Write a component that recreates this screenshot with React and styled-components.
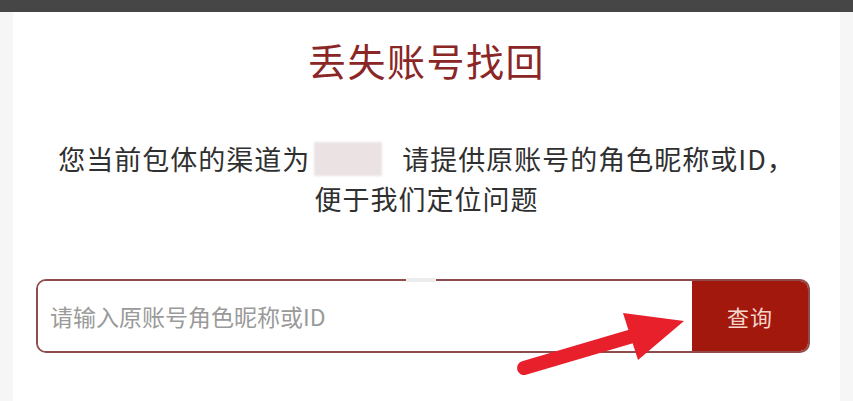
import styled, { createGlobalStyle } from 'styled-components';

const GlobalStyle = createGlobalStyle`
  html, body {
    margin: 0;
    padding: 0;
    height: 100%;
    overflow: hidden;
    background: #f6f6f6;
    font-family: "Noto Sans CJK SC", "Noto Sans", sans-serif;
  }
  #root {
    height: 100%;
  }
`;

const Screen = styled.div`
  display: flex;
  flex-direction: column;
  height: 100%;
`;

const TopBar = styled.div`
  height: 12px;
  background: #464646;
  flex-shrink: 0;
`;

const Page = styled.div`
  flex: 1;
  padding: 0 13px;
  display: flex;
`;

const Card = styled.div`
  flex: 1;
  background: #ffffff;
  padding-top: 25px;
  display: flex;
  flex-direction: column;
  align-items: center;
`;

const Title = styled.h1`
  margin: 0;
  font-size: 38px;
  line-height: 46px;
  font-weight: 400;
  letter-spacing: 1.5px;
  color: #8a2626;
`;

const Notice = styled.p`
  margin: 56px 0 0;
  font-size: 27px;
  line-height: 40px;
  font-weight: 400;
  letter-spacing: 1px;
  color: #303030;
  text-align: center;
`;

const Hidden = styled.span`
  display: inline-block;
  width: 68px;
  height: 34px;
  margin: 0 20px 0 4px;
  vertical-align: -6px;
  background: #ebe3e3;
  filter: blur(1px);
`;

const SearchWrap = styled.div`
  position: relative;
  align-self: stretch;
  margin: 60px 30px 0 23px;
`;

const SearchBox = styled.div`
  display: flex;
  height: 74px;
  border: 2px solid #8f4c4c;
  border-radius: 10px;
  overflow: hidden;
  box-sizing: border-box;
`;

const Input = styled.input`
  flex: 1;
  border: none;
  outline: none;
  padding: 0 0 0 12px;
  font-family: inherit;
  font-size: 23px;
  color: #333;
  background: #fff;

  &::placeholder {
    color: #9a9a9a;
  }
`;

const SearchButton = styled.button`
  width: 116px;
  border: none;
  background: #a3180d;
  color: #f6d6cc;
  font-family: inherit;
  font-size: 22px;
  letter-spacing: 1px;
  cursor: pointer;
`;

const Glare = styled.span`
  position: absolute;
  left: 370px;
  top: -1px;
  width: 30px;
  height: 4px;
  background: #ececec;
`;

const Arrow = styled.svg`
  position: absolute;
  left: 0;
  top: 0;
  overflow: visible;
  pointer-events: none;
`;

const App = () => {
  return (
    <Screen>
      <GlobalStyle />
      <TopBar />
      <Page>
        <Card>
          <Title>丢失账号找回</Title>
          <Notice>
            您当前包体的渠道为<Hidden />请提供原账号的角色昵称或ID，
            <br />
            便于我们定位问题
          </Notice>
          <SearchWrap>
            <SearchBox>
              <Input placeholder='请输入原账号角色昵称或ID' />
              <SearchButton type='button'>查询</SearchButton>
            </SearchBox>
            <Glare />
            <Arrow width='774' height='110'>
              <line x1='488' y1='89' x2='600' y2='56' stroke='#e8202b' strokeWidth='14' strokeLinecap='round' />
              <polygon points='587,34 648,42 602,81' fill='#e8202b' />
            </Arrow>
          </SearchWrap>
        </Card>
      </Page>
    </Screen>
  );
};

export default App;
